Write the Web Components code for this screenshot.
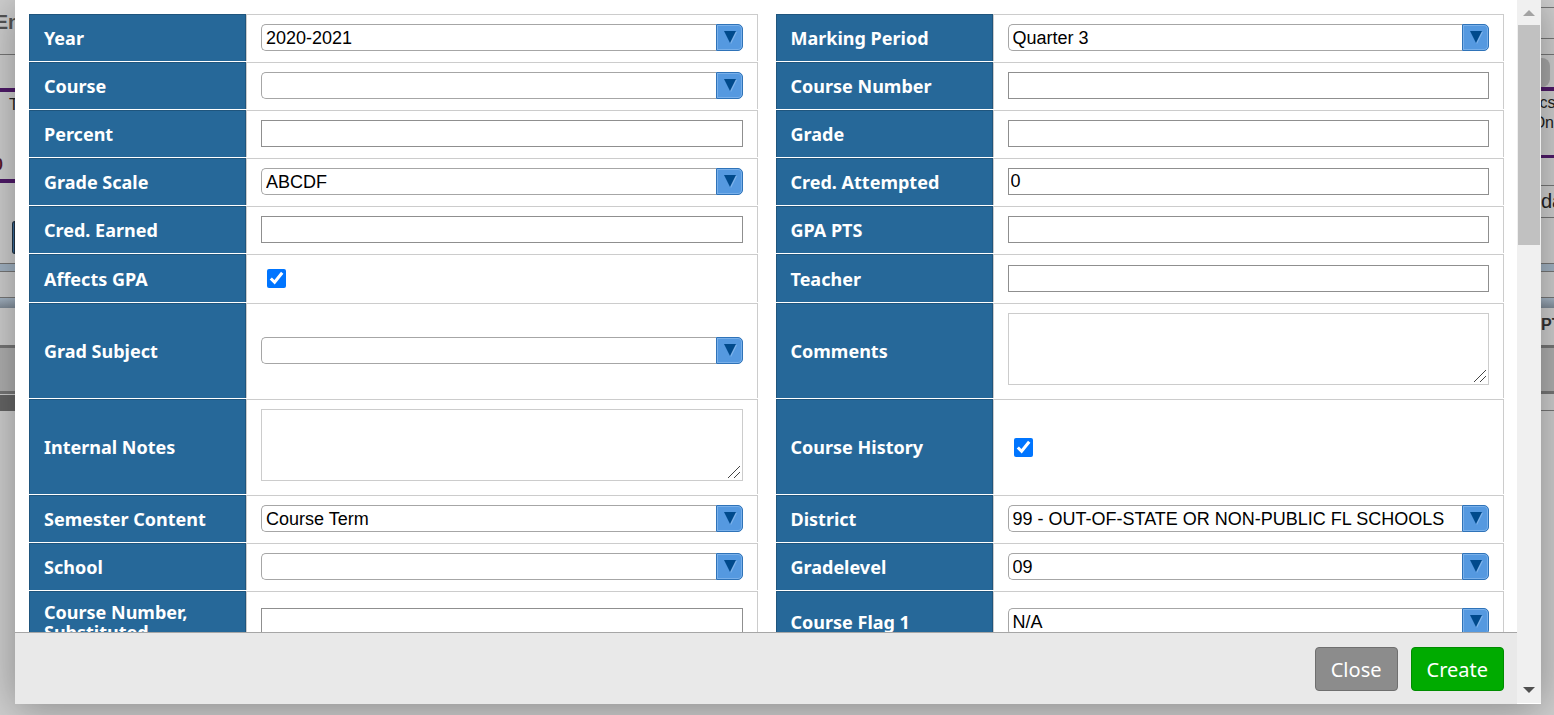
<!DOCTYPE html>
<html lang="en">
<head>
<meta charset="utf-8">
<title>Course History</title>
<style>
    html, body{height:100%;}
    body{
        margin:0;
        overflow:hidden;
        background:#cfcfcf;
        font-family:"Liberation Sans", Arial, sans-serif;
    }
</style>
</head>
<body>
<grade-page></grade-page>

<script>
const page_edge = document.createElement('template');
page_edge.innerHTML = `
    <style>
        :host{display:flex;flex-direction:column;height:100%;overflow:hidden;background:#cfcfcf;}
        div{
            flex:none;
            box-sizing:border-box;
            display:flex;
            align-items:center;
            overflow:hidden;
            white-space:nowrap;
            font-size:16px;
            color:#222;
        }
        .end{justify-content:flex-end;}
        .mid{justify-content:center;}
        .inset{padding-left:9px;}
        .tail{width:3px;justify-content:flex-end;font-weight:bold;color:#5a1a2a;}
        .title{font-size:20px;font-weight:bold;color:#555;}
        .big{font-size:20px;}
        .head{font-weight:bold;color:#333;}
        .line{background:#777;}
        .purple{background:#4f1a69;}
        .blue{background:#a3b4c4;border-top:1px solid #777;border-bottom:1px solid #777;}
        .fade{background:linear-gradient(#a9b9c8, #808c98);border-top:1px solid #777;}
        .grey{background:#b0b0b0;}
        .dark{background:#666;}
        .btn{background:#3a6d9e;border:1px solid #234;border-radius:4px 0 0 4px;margin-left:12px;}
        .pill{background:#a9a9a9;border-radius:0 8px 8px 0;margin-right:4px;}
    </style>
`;

class pageedge extends HTMLElement {
    constructor() {
        super();
        this.attachShadow({ mode: 'open' });
        this.shadowRoot.appendChild(page_edge.content.cloneNode(true));
    }
    // rows: [height, class, text]
    set rows(rows) {
        rows.forEach(([height, cls, text]) => {
            let row = document.createElement('div');
            row.className = cls || '';
            row.style.height = height + 'px';
            row.textContent = text || '';
            this.shadowRoot.appendChild(row);
        });
    }
}
window.customElements.define('page-edge', pageedge)


const grade_field = document.createElement('template');
grade_field.innerHTML = `
    <style>
        :host{display:flex;padding-bottom:1px;}
        *{box-sizing:border-box;}
        label{
            flex:0 0 217px;
            display:flex;
            align-items:center;
            padding:10px 14px;
            background:#266899;
            border:1px solid #1f557d;
            border-bottom:0;
            color:#fff;
            font:bold 18px/20px "Noto Sans", "Open Sans", sans-serif;
        }
        .cell{
            flex:1;
            min-width:0;
            display:flex;
            align-items:center;
            padding:9px 14px 10px;
            border:1px solid #ccc;
            border-bottom:0;
        }
        input, textarea, select{
            margin:0;
            font:18px "Liberation Sans", Arial, sans-serif;
            color:#000;
        }
        input[type=text]{
            width:100%;
            height:27px;
            padding:0 2px;
            border:1px solid #8f8f8f;
            border-radius:0;
        }
        input[type=checkbox]{
            width:19px;
            height:19px;
            margin:5px 6px 4px;
            accent-color:#0075ff;
        }
        textarea{
            display:block;
            width:100%;
            height:72px;
            margin:0 0 3px;
            border:1px solid #ccc;
            resize:vertical;
        }
        textarea::-webkit-resizer{
            background:url("data:image/svg+xml,%3Csvg xmlns='http://www.w3.org/2000/svg' width='15' height='15'%3E%3Cpath d='M1 13L13 1M7 13l6-6' stroke='%23444' fill='none'/%3E%3C/svg%3E") no-repeat right bottom;
        }
        .combo{
            display:flex;
            width:100%;
            height:27px;
            background:#fff;
            border-radius:5px;
        }
        select{
            flex:1;
            min-width:0;
            padding:0 0 0 4px;
            appearance:none;
            background:none;
            border:1px solid #a6a6a6;
            border-right:0;
            border-radius:5px 0 0 5px;
        }
        .arrow{
            flex:none;
            display:flex;
            width:27px;
            background:#5599e0;
            border:1px solid #2f73b8;
            border-radius:0 5px 5px 0;
            box-shadow:inset 0 0 0 1px #79b0ea;
        }
        svg{display:block;width:25px;height:25px;}
    </style>
    <label for="ctl"></label>
    <div class="cell"></div>
`;

class gradefield extends HTMLElement {
    constructor() {
        super();
        this.attachShadow({ mode: 'open' });
        this.shadowRoot.appendChild(grade_field.content.cloneNode(true));
    }
    connectedCallback() {
        let cell = this.shadowRoot.querySelector('.cell');
        let value = this.getAttribute('value') || '';
        this.shadowRoot.querySelector('label').textContent = this.getAttribute('label');

        switch (this.getAttribute('type')) {
            case 'select':
                cell.innerHTML = `<div class="combo"><select id="ctl"><option>${value}</option></select>
                    <span class="arrow"><svg viewBox="0 0 25 25"><path d="M8 7h12l-6 12z" fill="#7db2ea"/><path d="M7 6h12l-6 12z" fill="#004a8c"/></svg></span></div>`;
                break;
            case 'checkbox':
                cell.innerHTML = '<input type="checkbox" id="ctl" checked>';
                break;
            case 'textarea':
                cell.innerHTML = '<textarea id="ctl"></textarea>';
                break;
            default:
                cell.innerHTML = `<input type="text" id="ctl" value="${value}">`;
        }
    }
}
window.customElements.define('grade-field', gradefield)


const grade_button = document.createElement('template');
grade_button.innerHTML = `
    <style>
        :host{display:block;}
        button{
            display:block;
            height:44px;
            padding:0 15px;
            background:#8c8c8c;
            border:1px solid #6f6f6f;
            border-radius:4px;
            color:#fff;
            font:20px "Noto Sans", "Open Sans", sans-serif;
            cursor:pointer;
        }
        :host([primary]) button{background:#00ab00;border-color:#008c00;}
    </style>
    <button type="button"><slot></slot></button>
`;

class gradebutton extends HTMLElement {
    constructor() {
        super();
        this.attachShadow({ mode: 'open' });
        this.shadowRoot.appendChild(grade_button.content.cloneNode(true));
    }
}
window.customElements.define('grade-button', gradebutton)


const scroll_rail = document.createElement('template');
scroll_rail.innerHTML = `
    <style>
        :host{display:flex;flex-direction:column;align-items:center;width:24px;margin-bottom:1px;background:#f0f0f0;}
        svg{flex:none;display:block;width:24px;height:25px;}
        .thumb{width:22px;height:220px;background:#c1c1c1;}
        .track{flex:1;}
    </style>
    <svg viewBox="0 0 24 25"><path d="M6 16l6-6 6 6z" fill="#a3a3a3"/></svg>
    <div class="thumb"></div>
    <div class="track"></div>
    <svg viewBox="0 0 24 25"><path d="M6 9l6 6 6-6z" fill="#505050"/></svg>
`;

class scrollrail extends HTMLElement {
    constructor() {
        super();
        this.attachShadow({ mode: 'open' });
        this.shadowRoot.appendChild(scroll_rail.content.cloneNode(true));
    }
}
window.customElements.define('scroll-rail', scrollrail)


const grade_dialog = document.createElement('template');
grade_dialog.innerHTML = `
    <style>
        :host{display:flex;background:#fff;box-shadow:0 4px 40px rgba(0, 0, 0, 0.35);}
        .main{flex:1;min-width:0;display:flex;flex-direction:column;}
        .fields{
            flex:1;
            min-height:0;
            overflow:hidden;
            display:grid;
            grid-template-columns:1fr 1fr;
            align-content:start;
            column-gap:18px;
            padding:14px 13px 0 14px;
        }
        .foot{
            flex:none;
            display:flex;
            justify-content:flex-end;
            gap:13px;
            padding:14px 13px 13px;
            background:#e9e9e9;
            border-top:1px solid #a6a6a6;
        }
    </style>
    <div class="main">
        <div class="fields"><slot></slot></div>
        <div class="foot"><slot name="foot"></slot></div>
    </div>
    <scroll-rail></scroll-rail>
`;

class gradedialog extends HTMLElement {
    constructor() {
        super();
        this.attachShadow({ mode: 'open' });
        this.shadowRoot.appendChild(grade_dialog.content.cloneNode(true));
    }
}
window.customElements.define('grade-dialog', gradedialog)


const grade_page = document.createElement('template');
grade_page.innerHTML = `
    <style>
        :host{display:grid;grid-template-columns:15px minmax(0, 1fr) 13px;height:100vh;overflow:hidden;}
        grade-dialog{height:calc(100vh - 11px);z-index:1;}
    </style>
    <page-edge class="left"></page-edge>
    <grade-dialog>
        <grade-field type="select" label="Year" value="2020-2021"></grade-field>
        <grade-field type="select" label="Marking Period" value="Quarter 3"></grade-field>
        <grade-field type="select" label="Course"></grade-field>
        <grade-field label="Course Number"></grade-field>
        <grade-field label="Percent"></grade-field>
        <grade-field label="Grade"></grade-field>
        <grade-field type="select" label="Grade Scale" value="ABCDF"></grade-field>
        <grade-field label="Cred. Attempted" value="0"></grade-field>
        <grade-field label="Cred. Earned"></grade-field>
        <grade-field label="GPA PTS"></grade-field>
        <grade-field type="checkbox" label="Affects GPA"></grade-field>
        <grade-field label="Teacher"></grade-field>
        <grade-field type="select" label="Grad Subject"></grade-field>
        <grade-field type="textarea" label="Comments"></grade-field>
        <grade-field type="textarea" label="Internal Notes"></grade-field>
        <grade-field type="checkbox" label="Course History"></grade-field>
        <grade-field type="select" label="Semester Content" value="Course Term"></grade-field>
        <grade-field type="select" label="District" value="99 - OUT-OF-STATE OR NON-PUBLIC FL SCHOOLS"></grade-field>
        <grade-field type="select" label="School"></grade-field>
        <grade-field type="select" label="Gradelevel" value="09"></grade-field>
        <grade-field label="Course Number, Substituted"></grade-field>
        <grade-field type="select" label="Course Flag 1" value="N/A"></grade-field>
        <grade-button slot="foot">Close</grade-button>
        <grade-button slot="foot" primary>Create</grade-button>
    </grade-dialog>
    <page-edge class="right"></page-edge>
`;

class gradepage extends HTMLElement {
    constructor() {
        super();
        this.attachShadow({ mode: 'open' });
        this.shadowRoot.appendChild(grade_page.content.cloneNode(true));
    }
    connectedCallback() {
        this.shadowRoot.querySelector('.left').rows = [
            [10], [24, 'mid title', 'En'], [20], [1, 'line'], [33], [4, 'purple'],
            [26, 'inset', 'T'], [37], [20, 'tail', '0'], [4], [4, 'purple'], [38], [33, 'btn'], [9],
            [9, 'blue'], [25], [11, 'fade'], [37], [3, 'line'], [43, 'grey'],
            [3, 'line'], [1], [16, 'dark']
        ];
        this.shadowRoot.querySelector('.right').rows = [
            [7], [1, 'line'], [30], [1, 'line'], [15], [1, 'line'], [3], [29, 'pill'],
            [4, 'purple'], [2], [20, 'mid', 'cs'], [20, 'end', 'On'], [22], [3, 'purple'], [27],
            [1, 'line'], [3], [24, 'big', 'da'], [4], [1, 'line'], [45],
            [9, 'blue'], [25], [11, 'fade'], [5], [24, 'head', 'PT'], [8], [3, 'line'], [43, 'grey'],
            [3, 'line'], [16], [1, 'line']
        ];
    }
}
window.customElements.define('grade-page', gradepage)
</script>
</body>
</html>
